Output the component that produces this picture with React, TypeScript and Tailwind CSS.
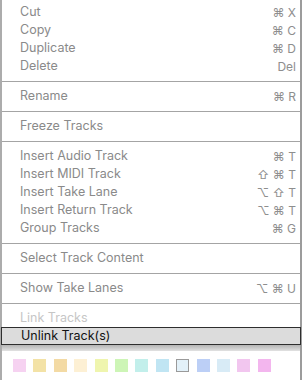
import React from 'react';

type Item = { label: string; keys?: string; disabled?: boolean; active?: boolean } | 'sep';

const items: Item[] = [
  { label: 'Cut', keys: '⌘ X' },
  { label: 'Copy', keys: '⌘ C' },
  { label: 'Duplicate', keys: '⌘ D' },
  { label: 'Delete', keys: 'Del' },
  'sep',
  { label: 'Rename', keys: '⌘ R' },
  'sep',
  { label: 'Freeze Tracks' },
  'sep',
  { label: 'Insert Audio Track', keys: '⌘ T' },
  { label: 'Insert MIDI Track', keys: '⇧ ⌘ T' },
  { label: 'Insert Take Lane', keys: '⌥ ⇧ T' },
  { label: 'Insert Return Track', keys: '⌥ ⌘ T' },
  { label: 'Group Tracks', keys: '⌘ G' },
  'sep',
  { label: 'Select Track Content' },
  'sep',
  { label: 'Show Take Lanes', keys: '⌥ ⌘ U' },
  'sep',
  { label: 'Link Tracks', disabled: true },
  { label: 'Unlink Track(s)', active: true },
];

const swatches = [
  'bg-[#f6d2f1]', 'bg-[#f3e2a6]', 'bg-[#f3daa4]', 'bg-[#fdf0d4]', 'bg-[#eff5ae]',
  'bg-[#cdf5b6]', 'bg-[#c2efeb]', 'bg-[#c0e5f3]', 'bg-[#e3f1f9] border border-[#9a9a9a]',
  'bg-[#bccff6]', 'bg-[#d8ebf6]', 'bg-[#f2c6ef]', 'bg-[#f3b6ee]',
];

export default function App() {
  return (
    <div className="w-[304px] h-[380px] bg-white overflow-hidden" style={{ fontFamily: 'Inter, "DejaVu Sans", sans-serif' }}>
      <div className="w-[302px] h-full border-l-2 border-r-2 border-l-[#acacac] border-r-[#9c9c9c] flex flex-col">
        <div className="pt-[3px]">
          {items.map((it, i) =>
            it === 'sep' ? (
              <div key={i} className="h-[12px] flex flex-col justify-start pt-[6px]">
                <div className="h-px bg-[#a4a4a4]" />
              </div>
            ) : it.active ? (
              <div key={i} className="h-[18px] -ml-[1px] -mr-[1px] flex items-center pl-[19px] pr-1 pt-px border border-[#2e2e2e] bg-[#dcdcdc] text-[12.5px] text-[#111]">
                {it.label}
              </div>
            ) : (
              <div key={i} className={`h-[18px] flex items-center justify-between pl-[18px] pr-[4px] pt-px text-[12.5px] ${it.disabled ? 'text-[#c6c6c6]' : 'text-[#8a8a8a]'}`}>
                <span>{it.label}</span>
                {it.keys && <span className="text-[12px] text-[#8e8e8e]">{it.keys}</span>}
              </div>
            )
          )}
        </div>
        <div className="h-[6px] bg-gradient-to-b from-[#b4b4b4] to-[#e2e2e2]" />
        <div className="flex gap-[7.4px] pl-[11px] pt-[8px]">
          {swatches.map((c, i) => (
            <div key={i} className={`w-[13px] h-[13px] shrink-0 ${c}`} />
          ))}
        </div>
      </div>
    </div>
  );
}
